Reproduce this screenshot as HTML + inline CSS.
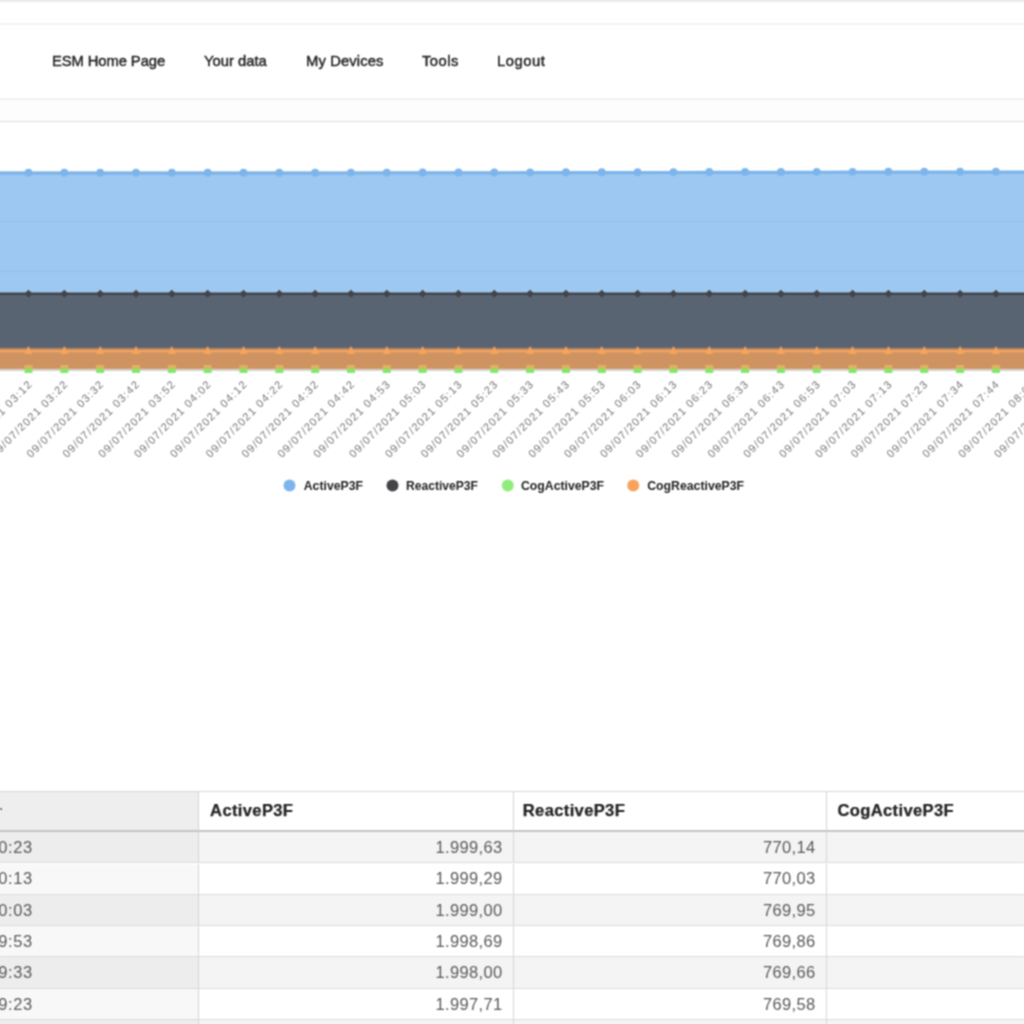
<!DOCTYPE html>
<html lang="en">
<head>
<meta charset="utf-8">
<title>ESM - Your data</title>
<style>
html,body{margin:0;padding:0;overflow:hidden;}
html{width:1024px;height:1024px;background:#fff;}
body{width:1024px;height:1024px;overflow:hidden;background:#fff;position:relative;
  font-family:"Liberation Sans", sans-serif;color:#333;}
#clip{position:absolute;left:0;top:0;width:1024px;height:1024px;overflow:hidden;}
#w{position:absolute;left:-24px;top:-24px;width:1072px;height:1072px;background:#fff;overflow:hidden;filter:url(#bl);}
#p{position:absolute;left:24px;top:24px;width:1024px;height:1024px;}
.abs{position:absolute;}
.hl{position:absolute;left:-24px;width:1072px;height:1px;}
.nav a{position:absolute;top:52.4px;height:18px;line-height:18px;font-size:14.8px;color:#222;
  white-space:nowrap;text-decoration:none;-webkit-text-stroke:0.4px #222;}
.chart{position:absolute;left:0;top:0;overflow:visible;}
.thead{position:absolute;left:0;top:790.5px;width:1024px;height:41.5px;}
.th{position:absolute;top:0;height:100%;box-sizing:border-box;border-top:1.5px solid #d6d6d6;border-bottom:2px solid #c4c4c4;
  border-right:1.2px solid #d4d4d4;background:#fff;font-weight:bold;font-size:16.6px;letter-spacing:0.33px;color:#242424;-webkit-text-stroke:0.25px #242424;}
.th span{position:absolute;left:11px;top:9.5px;line-height:20px;white-space:nowrap;}
.tr{position:absolute;left:0;width:1024px;box-sizing:border-box;border-bottom:1px solid #dcdcdc;}
.td{position:absolute;top:0;height:100%;box-sizing:border-box;border-right:1.2px solid #d6d6d6;font-size:16.5px;letter-spacing:0.35px;color:#5a5a5a;}
.td span{position:absolute;right:10.4px;top:50%;margin-top:-10.2px;line-height:20px;white-space:nowrap;}
.c0{left:-24px;width:223.1px;}
.c1{left:199.1px;width:314.9px;}
.c2{left:514px;width:313px;}
.c3{left:827px;width:314px;}
.td.c0 span{right:auto;left:22.3px;letter-spacing:0.6px;}
.odd .td{background:#f4f4f4;}
.odd .c0{background:#ededed;}
.even .td{background:#fff;}
.even .c0{background:#f8f8f8;}
</style>
</head>
<body>
<svg width="0" height="0" style="position:absolute"><filter id="bl" x="0" y="0" width="100%" height="100%" color-interpolation-filters="sRGB"><feConvolveMatrix order="3" kernelMatrix="0.0625 0.1250 0.0625 0.1250 0.2500 0.1250 0.0625 0.1250 0.0625" divisor="1" edgeMode="duplicate" preserveAlpha="true"/></filter></svg>
<div id="clip"><div id="w"><div id="p">
<div class="hl" style="top:-4px;height:5.8px;background:#ebebeb"></div>
<div class="hl" style="top:23px;height:2px;background:#f2f2f2"></div>
<div class="hl" style="top:98px;height:2px;background:#f1f1f1"></div>
<div class="abs" style="left:-24px;top:100px;width:1072px;height:21px;background:#fdfdfd"></div>

<div class="nav">
<a style="left:52px;letter-spacing:-0.1px" id="n0">ESM Home Page</a>
<a style="left:204px" id="n1">Your data</a>
<a style="left:306px;letter-spacing:0.1px" id="n2">My Devices</a>
<a style="left:422px;letter-spacing:0.45px" id="n3">Tools</a>
<a style="left:497px;letter-spacing:0.5px" id="n4">Logout</a>
</div>

<svg class="chart" width="1024" height="520" viewBox="0 0 1024 520">
<path d="M-24 121.5 H1048" stroke="#e0e0e0" stroke-width="1" fill="none"/>
<path d="M-24 171.5 H1048" stroke="#e0e0e0" stroke-width="1" fill="none"/>
<path d="M-24 221.5 H1048" stroke="#e0e0e0" stroke-width="1" fill="none"/>
<path d="M-24 271.5 H1048" stroke="#e0e0e0" stroke-width="1" fill="none"/>
<path d="M-24 321.5 H1048" stroke="#e0e0e0" stroke-width="1" fill="none"/>
<path d="M-43.16 173.10 L-7.33 173.10 L28.50 173.10 L64.33 173.10 L100.16 173.10 L135.99 173.10 L171.82 173.10 L207.65 173.10 L243.48 173.10 L279.31 173.10 L315.14 173.07 L350.97 173.02 L386.80 172.96 L422.63 172.90 L458.46 172.84 L494.29 172.78 L530.12 172.72 L565.95 172.66 L601.78 172.60 L637.61 172.54 L673.44 172.48 L709.27 172.42 L745.10 172.36 L780.93 172.30 L816.76 172.24 L852.59 172.18 L888.42 172.12 L924.25 172.10 L960.08 172.10 L995.91 172.10 L1031.74 172.10 L1067.57 172.10 L1103.40 172.10 L1103.40 368.9 L-43.16 368.9 Z" fill="#7cb5ec" fill-opacity="0.75"/>
<path d="M-43.16 173.10 L-7.33 173.10 L28.50 173.10 L64.33 173.10 L100.16 173.10 L135.99 173.10 L171.82 173.10 L207.65 173.10 L243.48 173.10 L279.31 173.10 L315.14 173.07 L350.97 173.02 L386.80 172.96 L422.63 172.90 L458.46 172.84 L494.29 172.78 L530.12 172.72 L565.95 172.66 L601.78 172.60 L637.61 172.54 L673.44 172.48 L709.27 172.42 L745.10 172.36 L780.93 172.30 L816.76 172.24 L852.59 172.18 L888.42 172.12 L924.25 172.10 L960.08 172.10 L995.91 172.10 L1031.74 172.10 L1067.57 172.10 L1103.40 172.10" stroke="#7cb5ec" stroke-width="3.2" fill="none" stroke-linejoin="round"/>
<g fill="#7cb5ec"><circle cx="-43.16" cy="172.70" r="3.9"/><circle cx="-7.33" cy="172.70" r="3.9"/><circle cx="28.50" cy="172.70" r="3.9"/><circle cx="64.33" cy="172.70" r="3.9"/><circle cx="100.16" cy="172.70" r="3.9"/><circle cx="135.99" cy="172.70" r="3.9"/><circle cx="171.82" cy="172.70" r="3.9"/><circle cx="207.65" cy="172.70" r="3.9"/><circle cx="243.48" cy="172.70" r="3.9"/><circle cx="279.31" cy="172.70" r="3.9"/><circle cx="315.14" cy="172.67" r="3.9"/><circle cx="350.97" cy="172.62" r="3.9"/><circle cx="386.80" cy="172.56" r="3.9"/><circle cx="422.63" cy="172.50" r="3.9"/><circle cx="458.46" cy="172.44" r="3.9"/><circle cx="494.29" cy="172.38" r="3.9"/><circle cx="530.12" cy="172.32" r="3.9"/><circle cx="565.95" cy="172.26" r="3.9"/><circle cx="601.78" cy="172.20" r="3.9"/><circle cx="637.61" cy="172.14" r="3.9"/><circle cx="673.44" cy="172.08" r="3.9"/><circle cx="709.27" cy="172.02" r="3.9"/><circle cx="745.10" cy="171.96" r="3.9"/><circle cx="780.93" cy="171.90" r="3.9"/><circle cx="816.76" cy="171.84" r="3.9"/><circle cx="852.59" cy="171.78" r="3.9"/><circle cx="888.42" cy="171.72" r="3.9"/><circle cx="924.25" cy="171.70" r="3.9"/><circle cx="960.08" cy="171.70" r="3.9"/><circle cx="995.91" cy="171.70" r="3.9"/><circle cx="1031.74" cy="171.70" r="3.9"/><circle cx="1067.57" cy="171.70" r="3.9"/><circle cx="1103.40" cy="171.70" r="3.9"/></g>
<path d="M-43.16 293.80 L-7.33 293.80 L28.50 293.80 L64.33 293.80 L100.16 293.80 L135.99 293.80 L171.82 293.80 L207.65 293.80 L243.48 293.80 L279.31 293.80 L315.14 293.80 L350.97 293.80 L386.80 293.80 L422.63 293.80 L458.46 293.80 L494.29 293.80 L530.12 293.80 L565.95 293.80 L601.78 293.80 L637.61 293.80 L673.44 293.80 L709.27 293.80 L745.10 293.80 L780.93 293.80 L816.76 293.80 L852.59 293.80 L888.42 293.80 L924.25 293.80 L960.08 293.80 L995.91 293.80 L1031.74 293.80 L1067.57 293.80 L1103.40 293.80 L1103.40 368.9 L-43.16 368.9 Z" fill="#434348" fill-opacity="0.75"/>
<path d="M-43.16 293.80 L-7.33 293.80 L28.50 293.80 L64.33 293.80 L100.16 293.80 L135.99 293.80 L171.82 293.80 L207.65 293.80 L243.48 293.80 L279.31 293.80 L315.14 293.80 L350.97 293.80 L386.80 293.80 L422.63 293.80 L458.46 293.80 L494.29 293.80 L530.12 293.80 L565.95 293.80 L601.78 293.80 L637.61 293.80 L673.44 293.80 L709.27 293.80 L745.10 293.80 L780.93 293.80 L816.76 293.80 L852.59 293.80 L888.42 293.80 L924.25 293.80 L960.08 293.80 L995.91 293.80 L1031.74 293.80 L1067.57 293.80 L1103.40 293.80" stroke="#434348" stroke-width="2.6" fill="none"/>
<g fill="#434348"><path d="M-43.16 289.80 l4 4 l-4 4 l-4 -4 Z"/><path d="M-7.33 289.80 l4 4 l-4 4 l-4 -4 Z"/><path d="M28.50 289.80 l4 4 l-4 4 l-4 -4 Z"/><path d="M64.33 289.80 l4 4 l-4 4 l-4 -4 Z"/><path d="M100.16 289.80 l4 4 l-4 4 l-4 -4 Z"/><path d="M135.99 289.80 l4 4 l-4 4 l-4 -4 Z"/><path d="M171.82 289.80 l4 4 l-4 4 l-4 -4 Z"/><path d="M207.65 289.80 l4 4 l-4 4 l-4 -4 Z"/><path d="M243.48 289.80 l4 4 l-4 4 l-4 -4 Z"/><path d="M279.31 289.80 l4 4 l-4 4 l-4 -4 Z"/><path d="M315.14 289.80 l4 4 l-4 4 l-4 -4 Z"/><path d="M350.97 289.80 l4 4 l-4 4 l-4 -4 Z"/><path d="M386.80 289.80 l4 4 l-4 4 l-4 -4 Z"/><path d="M422.63 289.80 l4 4 l-4 4 l-4 -4 Z"/><path d="M458.46 289.80 l4 4 l-4 4 l-4 -4 Z"/><path d="M494.29 289.80 l4 4 l-4 4 l-4 -4 Z"/><path d="M530.12 289.80 l4 4 l-4 4 l-4 -4 Z"/><path d="M565.95 289.80 l4 4 l-4 4 l-4 -4 Z"/><path d="M601.78 289.80 l4 4 l-4 4 l-4 -4 Z"/><path d="M637.61 289.80 l4 4 l-4 4 l-4 -4 Z"/><path d="M673.44 289.80 l4 4 l-4 4 l-4 -4 Z"/><path d="M709.27 289.80 l4 4 l-4 4 l-4 -4 Z"/><path d="M745.10 289.80 l4 4 l-4 4 l-4 -4 Z"/><path d="M780.93 289.80 l4 4 l-4 4 l-4 -4 Z"/><path d="M816.76 289.80 l4 4 l-4 4 l-4 -4 Z"/><path d="M852.59 289.80 l4 4 l-4 4 l-4 -4 Z"/><path d="M888.42 289.80 l4 4 l-4 4 l-4 -4 Z"/><path d="M924.25 289.80 l4 4 l-4 4 l-4 -4 Z"/><path d="M960.08 289.80 l4 4 l-4 4 l-4 -4 Z"/><path d="M995.91 289.80 l4 4 l-4 4 l-4 -4 Z"/><path d="M1031.74 289.80 l4 4 l-4 4 l-4 -4 Z"/><path d="M1067.57 289.80 l4 4 l-4 4 l-4 -4 Z"/><path d="M1103.40 289.80 l4 4 l-4 4 l-4 -4 Z"/></g>
<path d="M-24 369.9 H1048" stroke="#d2d3ce" stroke-width="2.2" fill="none"/>
<g fill="#80e96c"><rect x="-47.16" y="365.00" width="8" height="8"/><rect x="-11.33" y="365.00" width="8" height="8"/><rect x="24.50" y="365.00" width="8" height="8"/><rect x="60.33" y="365.00" width="8" height="8"/><rect x="96.16" y="365.00" width="8" height="8"/><rect x="131.99" y="365.00" width="8" height="8"/><rect x="167.82" y="365.00" width="8" height="8"/><rect x="203.65" y="365.00" width="8" height="8"/><rect x="239.48" y="365.00" width="8" height="8"/><rect x="275.31" y="365.00" width="8" height="8"/><rect x="311.14" y="365.00" width="8" height="8"/><rect x="346.97" y="365.00" width="8" height="8"/><rect x="382.80" y="365.00" width="8" height="8"/><rect x="418.63" y="365.00" width="8" height="8"/><rect x="454.46" y="365.00" width="8" height="8"/><rect x="490.29" y="365.00" width="8" height="8"/><rect x="526.12" y="365.00" width="8" height="8"/><rect x="561.95" y="365.00" width="8" height="8"/><rect x="597.78" y="365.00" width="8" height="8"/><rect x="633.61" y="365.00" width="8" height="8"/><rect x="669.44" y="365.00" width="8" height="8"/><rect x="705.27" y="365.00" width="8" height="8"/><rect x="741.10" y="365.00" width="8" height="8"/><rect x="776.93" y="365.00" width="8" height="8"/><rect x="812.76" y="365.00" width="8" height="8"/><rect x="848.59" y="365.00" width="8" height="8"/><rect x="884.42" y="365.00" width="8" height="8"/><rect x="920.25" y="365.00" width="8" height="8"/><rect x="956.08" y="365.00" width="8" height="8"/><rect x="991.91" y="365.00" width="8" height="8"/><rect x="1027.74" y="365.00" width="8" height="8"/><rect x="1063.57" y="365.00" width="8" height="8"/><rect x="1099.40" y="365.00" width="8" height="8"/></g>
<path d="M-43.16 351.00 L-7.33 351.00 L28.50 351.00 L64.33 351.00 L100.16 351.00 L135.99 351.00 L171.82 351.00 L207.65 351.00 L243.48 351.00 L279.31 351.00 L315.14 351.00 L350.97 351.00 L386.80 351.00 L422.63 351.00 L458.46 351.00 L494.29 351.00 L530.12 351.00 L565.95 351.00 L601.78 351.00 L637.61 351.00 L673.44 351.00 L709.27 351.00 L745.10 351.00 L780.93 351.00 L816.76 351.00 L852.59 351.00 L888.42 351.00 L924.25 351.00 L960.08 351.00 L995.91 351.00 L1031.74 351.00 L1067.57 351.00 L1103.40 351.00 L1103.40 368.9 L-43.16 368.9 Z" fill="#f7a35c" fill-opacity="0.75"/>
<rect x="-24" y="347.8" width="1072" height="2.2" fill="#f7a35c" fill-opacity="0.5"/>
<path d="M-43.16 351.00 L-7.33 351.00 L28.50 351.00 L64.33 351.00 L100.16 351.00 L135.99 351.00 L171.82 351.00 L207.65 351.00 L243.48 351.00 L279.31 351.00 L315.14 351.00 L350.97 351.00 L386.80 351.00 L422.63 351.00 L458.46 351.00 L494.29 351.00 L530.12 351.00 L565.95 351.00 L601.78 351.00 L637.61 351.00 L673.44 351.00 L709.27 351.00 L745.10 351.00 L780.93 351.00 L816.76 351.00 L852.59 351.00 L888.42 351.00 L924.25 351.00 L960.08 351.00 L995.91 351.00 L1031.74 351.00 L1067.57 351.00 L1103.40 351.00" stroke="#f7a35c" stroke-width="2.6" fill="none"/>
<g fill="#f7a35c"><path d="M-43.16 346.00 l4 8 h-8 Z"/><path d="M-7.33 346.00 l4 8 h-8 Z"/><path d="M28.50 346.00 l4 8 h-8 Z"/><path d="M64.33 346.00 l4 8 h-8 Z"/><path d="M100.16 346.00 l4 8 h-8 Z"/><path d="M135.99 346.00 l4 8 h-8 Z"/><path d="M171.82 346.00 l4 8 h-8 Z"/><path d="M207.65 346.00 l4 8 h-8 Z"/><path d="M243.48 346.00 l4 8 h-8 Z"/><path d="M279.31 346.00 l4 8 h-8 Z"/><path d="M315.14 346.00 l4 8 h-8 Z"/><path d="M350.97 346.00 l4 8 h-8 Z"/><path d="M386.80 346.00 l4 8 h-8 Z"/><path d="M422.63 346.00 l4 8 h-8 Z"/><path d="M458.46 346.00 l4 8 h-8 Z"/><path d="M494.29 346.00 l4 8 h-8 Z"/><path d="M530.12 346.00 l4 8 h-8 Z"/><path d="M565.95 346.00 l4 8 h-8 Z"/><path d="M601.78 346.00 l4 8 h-8 Z"/><path d="M637.61 346.00 l4 8 h-8 Z"/><path d="M673.44 346.00 l4 8 h-8 Z"/><path d="M709.27 346.00 l4 8 h-8 Z"/><path d="M745.10 346.00 l4 8 h-8 Z"/><path d="M780.93 346.00 l4 8 h-8 Z"/><path d="M816.76 346.00 l4 8 h-8 Z"/><path d="M852.59 346.00 l4 8 h-8 Z"/><path d="M888.42 346.00 l4 8 h-8 Z"/><path d="M924.25 346.00 l4 8 h-8 Z"/><path d="M960.08 346.00 l4 8 h-8 Z"/><path d="M995.91 346.00 l4 8 h-8 Z"/><path d="M1031.74 346.00 l4 8 h-8 Z"/><path d="M1067.57 346.00 l4 8 h-8 Z"/><path d="M1103.40 346.00 l4 8 h-8 Z"/></g>
<g font-family='"Liberation Sans", sans-serif' font-size="11" fill="#767676" text-anchor="end">
<text x="-39.36" y="385.5" transform="rotate(-45 -39.36 385.5)" textLength="103" lengthAdjust="spacing">09/07/2021 02:52</text>
<text x="-3.53" y="385.5" transform="rotate(-45 -3.53 385.5)" textLength="103" lengthAdjust="spacing">09/07/2021 03:02</text>
<text x="32.30" y="385.5" transform="rotate(-45 32.30 385.5)" textLength="103" lengthAdjust="spacing">09/07/2021 03:12</text>
<text x="68.13" y="385.5" transform="rotate(-45 68.13 385.5)" textLength="103" lengthAdjust="spacing">09/07/2021 03:22</text>
<text x="103.96" y="385.5" transform="rotate(-45 103.96 385.5)" textLength="103" lengthAdjust="spacing">09/07/2021 03:32</text>
<text x="139.79" y="385.5" transform="rotate(-45 139.79 385.5)" textLength="103" lengthAdjust="spacing">09/07/2021 03:42</text>
<text x="175.62" y="385.5" transform="rotate(-45 175.62 385.5)" textLength="103" lengthAdjust="spacing">09/07/2021 03:52</text>
<text x="211.45" y="385.5" transform="rotate(-45 211.45 385.5)" textLength="103" lengthAdjust="spacing">09/07/2021 04:02</text>
<text x="247.28" y="385.5" transform="rotate(-45 247.28 385.5)" textLength="103" lengthAdjust="spacing">09/07/2021 04:12</text>
<text x="283.11" y="385.5" transform="rotate(-45 283.11 385.5)" textLength="103" lengthAdjust="spacing">09/07/2021 04:22</text>
<text x="318.94" y="385.5" transform="rotate(-45 318.94 385.5)" textLength="103" lengthAdjust="spacing">09/07/2021 04:32</text>
<text x="354.77" y="385.5" transform="rotate(-45 354.77 385.5)" textLength="103" lengthAdjust="spacing">09/07/2021 04:42</text>
<text x="390.60" y="385.5" transform="rotate(-45 390.60 385.5)" textLength="103" lengthAdjust="spacing">09/07/2021 04:53</text>
<text x="426.43" y="385.5" transform="rotate(-45 426.43 385.5)" textLength="103" lengthAdjust="spacing">09/07/2021 05:03</text>
<text x="462.26" y="385.5" transform="rotate(-45 462.26 385.5)" textLength="103" lengthAdjust="spacing">09/07/2021 05:13</text>
<text x="498.09" y="385.5" transform="rotate(-45 498.09 385.5)" textLength="103" lengthAdjust="spacing">09/07/2021 05:23</text>
<text x="533.92" y="385.5" transform="rotate(-45 533.92 385.5)" textLength="103" lengthAdjust="spacing">09/07/2021 05:33</text>
<text x="569.75" y="385.5" transform="rotate(-45 569.75 385.5)" textLength="103" lengthAdjust="spacing">09/07/2021 05:43</text>
<text x="605.58" y="385.5" transform="rotate(-45 605.58 385.5)" textLength="103" lengthAdjust="spacing">09/07/2021 05:53</text>
<text x="641.41" y="385.5" transform="rotate(-45 641.41 385.5)" textLength="103" lengthAdjust="spacing">09/07/2021 06:03</text>
<text x="677.24" y="385.5" transform="rotate(-45 677.24 385.5)" textLength="103" lengthAdjust="spacing">09/07/2021 06:13</text>
<text x="713.07" y="385.5" transform="rotate(-45 713.07 385.5)" textLength="103" lengthAdjust="spacing">09/07/2021 06:23</text>
<text x="748.90" y="385.5" transform="rotate(-45 748.90 385.5)" textLength="103" lengthAdjust="spacing">09/07/2021 06:33</text>
<text x="784.73" y="385.5" transform="rotate(-45 784.73 385.5)" textLength="103" lengthAdjust="spacing">09/07/2021 06:43</text>
<text x="820.56" y="385.5" transform="rotate(-45 820.56 385.5)" textLength="103" lengthAdjust="spacing">09/07/2021 06:53</text>
<text x="856.39" y="385.5" transform="rotate(-45 856.39 385.5)" textLength="103" lengthAdjust="spacing">09/07/2021 07:03</text>
<text x="892.22" y="385.5" transform="rotate(-45 892.22 385.5)" textLength="103" lengthAdjust="spacing">09/07/2021 07:13</text>
<text x="928.05" y="385.5" transform="rotate(-45 928.05 385.5)" textLength="103" lengthAdjust="spacing">09/07/2021 07:23</text>
<text x="963.88" y="385.5" transform="rotate(-45 963.88 385.5)" textLength="103" lengthAdjust="spacing">09/07/2021 07:34</text>
<text x="999.71" y="385.5" transform="rotate(-45 999.71 385.5)" textLength="103" lengthAdjust="spacing">09/07/2021 07:44</text>
<text x="1035.54" y="385.5" transform="rotate(-45 1035.54 385.5)" textLength="103" lengthAdjust="spacing">09/07/2021 08:04</text>
<text x="1071.37" y="385.5" transform="rotate(-45 1071.37 385.5)" textLength="103" lengthAdjust="spacing">09/07/2021 08:14</text>
<text x="1107.20" y="385.5" transform="rotate(-45 1107.20 385.5)" textLength="103" lengthAdjust="spacing">09/07/2021 08:24</text>
</g>
<g font-family='"Liberation Sans", sans-serif' font-size="12" font-weight="bold" fill="#222">
<circle cx="289.5" cy="485.5" r="6" fill="#7cb5ec"/>
<text x="303.75" y="490.3" textLength="59.25" lengthAdjust="spacingAndGlyphs">ActiveP3F</text>
<circle cx="392.5" cy="485.5" r="6" fill="#434348"/>
<text x="406" y="490.3" textLength="72" lengthAdjust="spacingAndGlyphs">ReactiveP3F</text>
<circle cx="507.75" cy="485.5" r="6" fill="#90ed7d"/>
<text x="521" y="490.3" textLength="83" lengthAdjust="spacingAndGlyphs">CogActiveP3F</text>
<circle cx="633.25" cy="485.5" r="6" fill="#f7a35c"/>
<text x="647.25" y="490.3" textLength="96.75" lengthAdjust="spacingAndGlyphs">CogReactiveP3F</text>
</g>
</svg>

<div class="thead">
<div class="th c0" style="background:#eeeeee"><i style="position:absolute;left:24px;top:16.5px;width:1.8px;height:1.6px;background:#777"></i></div>
<div class="th c1"><span>ActiveP3F</span></div>
<div class="th c2"><span style="left:8.8px">ReactiveP3F</span></div>
<div class="th c3"><span style="left:10.5px">CogActiveP3F</span></div>
</div>
<div class="tr odd" style="top:832.2px;height:31.299999999999955px"><div class="td c0"><span class="t0">0:23</span></div><div class="td c1"><span>1.999,63</span></div><div class="td c2"><span>770,14</span></div><div class="td c3"></div></div>
<div class="tr even" style="top:863.5px;height:31.300000000000068px"><div class="td c0"><span class="t0">0:13</span></div><div class="td c1"><span>1.999,29</span></div><div class="td c2"><span>770,03</span></div><div class="td c3"></div></div>
<div class="tr odd" style="top:894.8000000000001px;height:31.299999999999955px"><div class="td c0"><span class="t0">0:03</span></div><div class="td c1"><span>1.999,00</span></div><div class="td c2"><span>769,95</span></div><div class="td c3"></div></div>
<div class="tr even" style="top:926.1px;height:31.300000000000068px"><div class="td c0"><span class="t0">9:53</span></div><div class="td c1"><span>1.998,69</span></div><div class="td c2"><span>769,86</span></div><div class="td c3"></div></div>
<div class="tr odd" style="top:957.4000000000001px;height:31.299999999999955px"><div class="td c0"><span class="t0">9:33</span></div><div class="td c1"><span>1.998,00</span></div><div class="td c2"><span>769,66</span></div><div class="td c3"></div></div>
<div class="tr even" style="top:988.7px;height:31.299999999999955px"><div class="td c0"><span class="t0">9:23</span></div><div class="td c1"><span>1.997,71</span></div><div class="td c2"><span>769,58</span></div><div class="td c3"></div></div>
<div class="tr odd" style="top:1020.0px;height:31.299999999999955px"><div class="td c0"><span class="t0">9:13</span></div><div class="td c1"><span>1.997,42</span></div><div class="td c2"><span>769,49</span></div><div class="td c3"></div></div>
</div></div></div>
</body>
</html>
